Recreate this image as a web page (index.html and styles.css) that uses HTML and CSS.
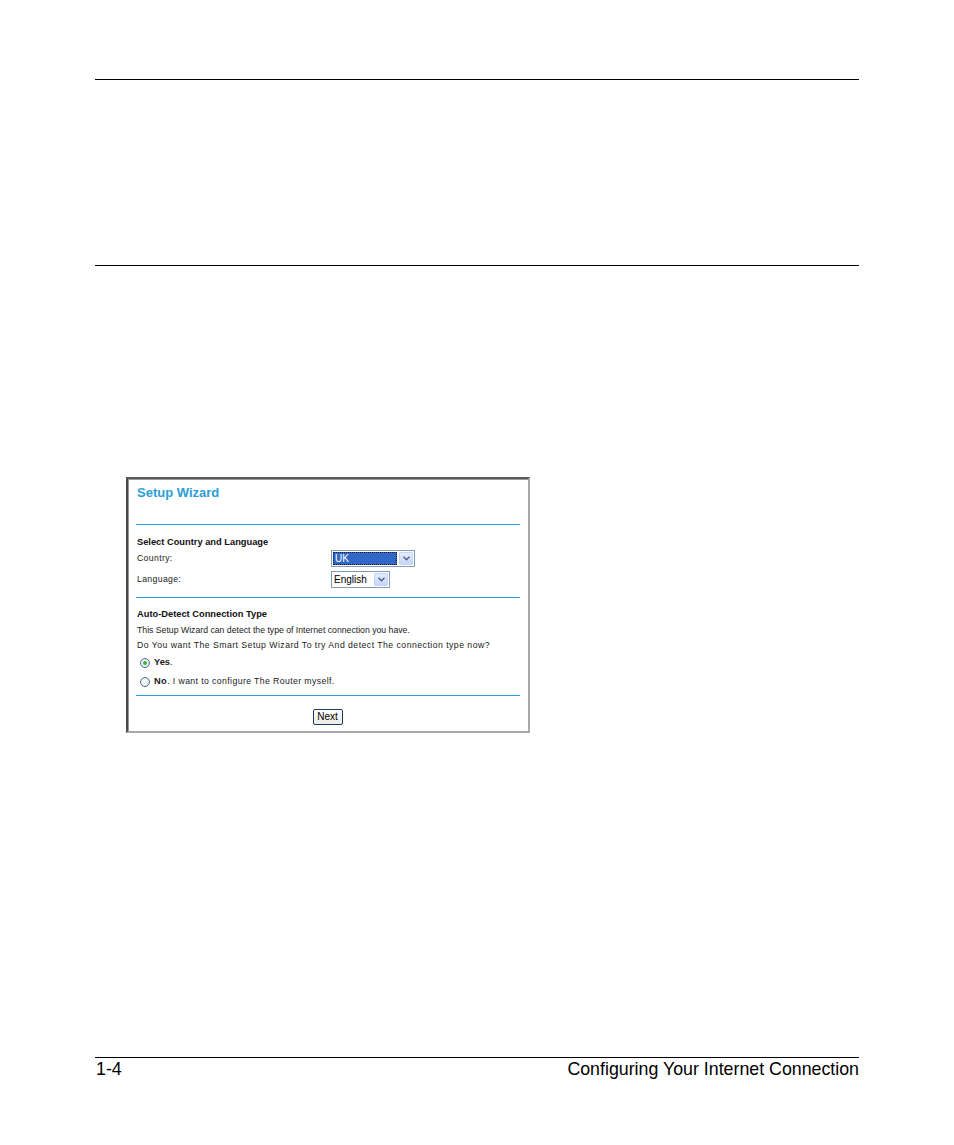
FILE: index.html
```html
<!DOCTYPE html>
<html lang="en">
<head>
<meta charset="utf-8">
<title>Configuring Your Internet Connection</title>
<link rel="stylesheet" href="styles.css">
</head>
<body>
<div class="page">
  <div class="rule"></div>
  <div class="header-space"></div>
  <div class="rule"></div>

  <div class="shot">
    <div class="title">Setup Wizard</div>
    <div class="blue-line line-title"></div>

    <div class="row heading first-heading">Select Country and Language</div>
    <div class="field-row">
      <span class="label">Country:</span>
      <span class="select select-country">
        <span class="select-value selected"><span class="focus">UK</span></span>
        <span class="select-arrow"><svg width="7" height="5" viewBox="0 0 7 5"><path d="M0.5 0.8 L3.5 3.8 L6.5 0.8" fill="none" stroke="#4d6185" stroke-width="1.4"/></svg></span>
      </span>
    </div>
    <div class="field-row field-row-2">
      <span class="label">Language:</span>
      <span class="select select-lang">
        <span class="select-value">English</span>
        <span class="select-arrow"><svg width="7" height="5" viewBox="0 0 7 5"><path d="M0.5 0.8 L3.5 3.8 L6.5 0.8" fill="none" stroke="#4d6185" stroke-width="1.4"/></svg></span>
      </span>
    </div>

    <div class="blue-line line-mid"></div>

    <div class="row heading second-heading">Auto-Detect Connection Type</div>
    <div class="row">This Setup Wizard can detect the type of Internet connection you have.</div>
    <div class="row row-short row-wide">Do You want The Smart Setup Wizard To try And detect The connection type now?</div>
    <div class="radio-row">
      <span class="radio checked"><span class="dot"></span></span>
      <span class="radio-text"><b>Yes</b>.</span>
    </div>
    <div class="radio-row">
      <span class="radio"></span>
      <span class="radio-text radio-wide"><b>No</b>. I want to configure The Router myself.</span>
    </div>

    <div class="blue-line line-bottom"></div>

    <div class="button-row">
      <span class="button">Next</span>
    </div>
  </div>

  <div class="footer">
    <div class="rule"></div>
    <div class="footer-text">
      <span>1-4</span>
      <span>Configuring Your Internet Connection</span>
    </div>
  </div>
</div>
</body>
</html>
```

FILE: styles.css
```css
html, body {
  margin: 0;
  padding: 0;
  background: #ffffff;
}

.page {
  box-sizing: border-box;
  width: 954px;
  height: 1145px;
  overflow: hidden;
  padding: 79px 95px 0 95px;
  font-family: "Liberation Sans", Arial, sans-serif;
  color: #000;
}

.rule {
  width: 764px;
  height: 1px;
  background: #000;
}

.header-space {
  height: 185px;
}

/* Screenshot frame */
.shot {
  box-sizing: border-box;
  width: 404px;
  margin: 211px 0 0 31px;
  padding: 4px 8px 6px 8px;
  background: #ffffff;
  border-style: solid;
  border-width: 2px;
  border-top-color: #5a5a5a;
  border-left-color: #4a4a4a;
  border-right-color: #a8a8a8;
  border-bottom-color: #a8a8a8;
  box-shadow: inset 1px 1px 0 #9a9a9a;
  font-size: 8.7px;
  color: #1a1a1a;
}

.title {
  height: 20px;
  line-height: 20px;
  padding-left: 1px;
  font-size: 13px;
  font-weight: bold;
  color: #2a9dd4;
}

.blue-line {
  height: 1px;
  background: #2aa0d8;
}

.line-title { margin-top: 21px; }
.line-mid { margin-top: 9px; }
.line-bottom { margin-top: 4px; }

.row {
  height: 16px;
  line-height: 16px;
  padding-left: 1px;
  white-space: nowrap;
}

.row-short {
  height: 15px;
  line-height: 15px;
}

.row-wide {
  letter-spacing: 0.47px;
}

.heading {
  font-size: 9.3px;
  font-weight: bold;
  color: #111;
}

.first-heading { margin-top: 9px; }
.second-heading { margin-top: 8px; }

.field-row {
  display: flex;
  align-items: center;
  height: 17px;
  line-height: 17px;
  padding-left: 1px;
}

.field-row-2 { margin-top: 4px; }

.label {
  width: 194px;
  letter-spacing: 0.35px;
}

.select {
  box-sizing: border-box;
  display: flex;
  align-items: stretch;
  height: 17px;
  border: 1px solid #7f9db9;
  background: #fff;
  font-size: 10px;
}

.select-country { width: 84px; }
.select-lang { width: 59px; }

.select-value {
  flex: 1;
  display: flex;
  align-items: center;
  padding: 1px;
  color: #000;
  line-height: 13px;
}

.select-lang .select-value {
  padding-left: 2px;
}

.select-value.selected .focus {
  box-sizing: border-box;
  display: block;
  width: 100%;
  height: 13px;
  padding-left: 1px;
  background: #3168c8;
  color: #fff;
  border: 1px dotted #1a1a1a;
  line-height: 11px;
}

.select-arrow {
  box-sizing: border-box;
  width: 14px;
  margin: 1px;
  display: flex;
  align-items: center;
  justify-content: center;
  background: linear-gradient(#e4ecfd, #c6d6fb);
  border: 1px solid #c3d3fd;
  border-radius: 1px;
}

.radio-row {
  display: flex;
  align-items: center;
  height: 19px;
  line-height: 19px;
  padding-left: 4px;
  white-space: nowrap;
}

.radio {
  box-sizing: border-box;
  width: 10px;
  height: 10px;
  border-radius: 50%;
  border: 1px solid #4a6f98;
  background: radial-gradient(circle at 40% 40%, #ffffff, #dcdcd4);
  display: flex;
  align-items: center;
  justify-content: center;
  margin-right: 4px;
}

.radio .dot {
  width: 4px;
  height: 4px;
  border-radius: 50%;
  background: #2fb83a;
}

.radio-text b {
  font-size: 9.3px;
  font-weight: bold;
}

.radio-wide {
  letter-spacing: 0.4px;
}

.button-row {
  display: flex;
  justify-content: center;
  margin-top: 13px;
  padding-left: 1px;
  padding-right: 2px;
}

.button {
  box-sizing: border-box;
  width: 30px;
  height: 16px;
  border: 1px solid #1c3c64;
  border-radius: 2px;
  background: linear-gradient(#ffffff, #ecebe4);
  font-size: 10px;
  line-height: 14px;
  text-align: center;
  color: #000;
}

/* Footer */
.footer {
  margin-top: 324px;
}

.footer-text {
  display: flex;
  justify-content: space-between;
  margin-top: 1px;
  padding-left: 1px;
  font-size: 17.8px;
  line-height: 20px;
  color: #000;
}
```
